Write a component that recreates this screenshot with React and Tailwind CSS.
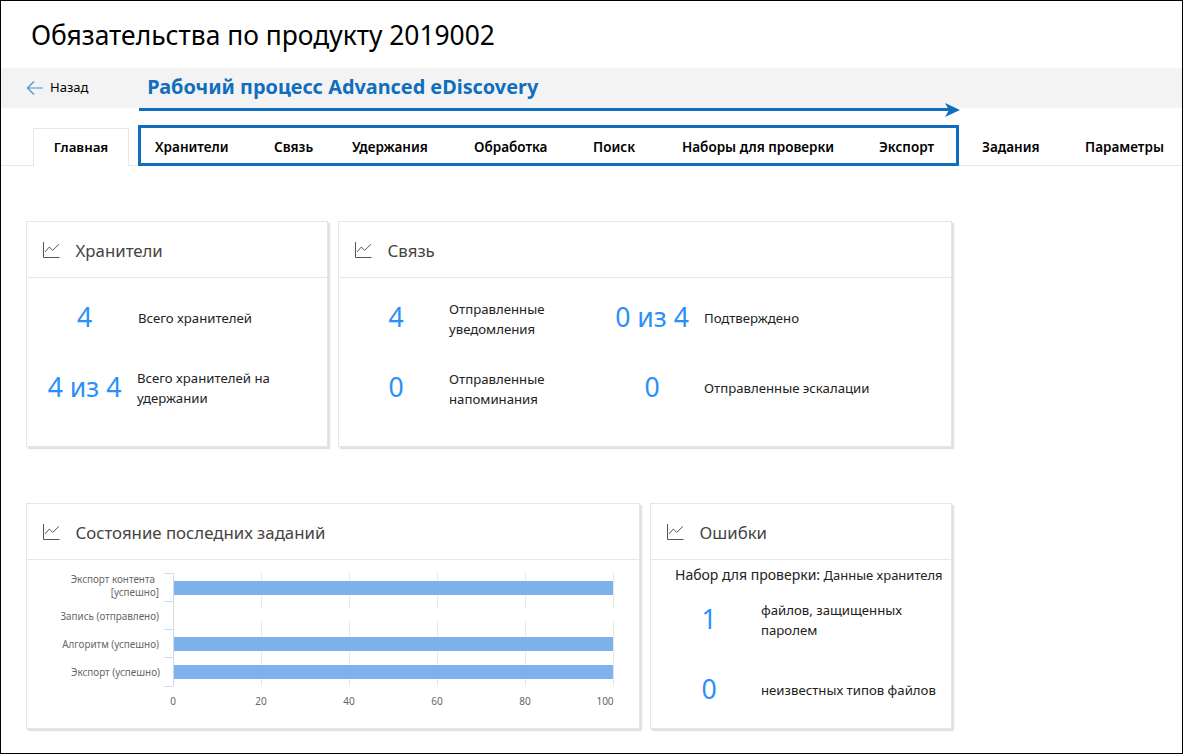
import React from "react";

function ChartIcon() {
  return (
    <svg width="18" height="18" viewBox="0 0 18 18" fill="none" stroke="#555" strokeWidth="1" className="shrink-0">
      <path d="M0.5 1V16.5H16.5" />
      <path d="M2 11L6.3 6L9.7 9.3L16 3.3" />
    </svg>
  );
}

function Card({ title, w, children }) {
  return (
    <div className={`${w} h-[226px] flex flex-col bg-white border border-[#e6e6e6] shadow-[2px_2px_1px_#e2e2e2]`}>
      <div className="h-[56px] shrink-0 flex items-center pl-[16px] border-b border-[#e6e6e6]">
        <ChartIcon />
        <span className="ml-[14.5px] mt-[4px] text-[16.8px] leading-none text-[#444]">{title}</span>
      </div>
      {children}
    </div>
  );
}

function Stat({ value, w, gap, children }) {
  return (
    <div className="flex items-center h-[40px]">
      <div className={`${w} -mt-[1px] text-center text-[26.6px] leading-none text-[#2b8ffa] shrink-0`}>{value}</div>
      <div className={`${gap} text-[13.2px] leading-[20px] text-[#222]`}>{children}</div>
    </div>
  );
}

const tabsInner = [
  ["Хранители", "w-[119px]"],
  ["Связь", "w-[78px]"],
  ["Удержания", "w-[122px]"],
  ["Обработка", "w-[119px]"],
  ["Поиск", "w-[89px]"],
  ["Наборы для проверки", "w-[197px]"],
  ["Экспорт", "w-[55px]"],
];

function Chart() {
  const grid = [261, 349, 437, 525, 613];
  return (
    <svg width="612" height="168" viewBox="27 560 612 168" className="block">
      {grid.map((x) => (
        <g key={x}>
          <line x1={x + 0.5} x2={x + 0.5} y1="573" y2="608" stroke="#e8e8e8" />
          <line x1={x + 0.5} x2={x + 0.5} y1="622" y2="686" stroke="#e8e8e8" />
        </g>
      ))}
      <line x1="173.5" x2="173.5" y1="573" y2="686" stroke="#d3dcec" />
      {[573, 601, 629, 657, 686].map((y) => (
        <line key={y} x1="164" x2="173" y1={y + 0.5} y2={y + 0.5} stroke="#d3dcec" />
      ))}
      {[581, 637, 665].map((y) => (
        <rect key={y} x="174" y={y} width="439" height="14" fill="#7cb3ec" />
      ))}
      <g fontFamily="'Noto Sans', sans-serif" fontSize="9.9" fill="#666" textAnchor="end">
        <text x="155" y="583">Экспорт контента</text>
        <text x="159" y="596">[успешно]</text>
        <text x="159" y="620">Запись (отправлено)</text>
        <text x="159" y="648">Алгоритм (успешно)</text>
        <text x="160" y="676">Экспорт (успешно)</text>
      </g>
      <g fontFamily="'Noto Sans', sans-serif" fontSize="10" fill="#666" textAnchor="middle">
        <text x="173" y="705">0</text>
        <text x="261" y="705">20</text>
        <text x="349" y="705">40</text>
        <text x="437" y="705">60</text>
        <text x="525" y="705">80</text>
        <text x="605" y="705">100</text>
      </g>
    </svg>
  );
}

export default function App() {
  return (
    <div className="relative w-[1183px] h-[754px] overflow-hidden border border-black bg-white font-['Noto_Sans',sans-serif] text-black">
      <div className="h-[67px] pl-[30px] pt-[2px] flex items-center text-[26.4px] leading-none">
        Обязательства по продукту 2019002
      </div>

      <div className="h-[40px] bg-[#f3f3f3] flex items-center">
        <svg width="18" height="16" viewBox="0 0 18 16" fill="none" stroke="#4a90d0" strokeWidth="1.2" className="ml-[25px]">
          <path d="M17 8H1.5M8 1.5L1.5 8L8 14.5" />
        </svg>
        <span className="ml-[6px] text-[13px]">Назад</span>
        <span className="ml-[59px] -mt-[3px] text-[19.85px] font-bold leading-none text-[#106ebe]">Рабочий процесс Advanced eDiscovery</span>
      </div>

      <div className="absolute left-[138px] top-[107px] w-[810px] h-[3px] bg-[#106ebe]" />
      <svg width="16" height="14" viewBox="0 0 16 14" className="absolute left-[944px] top-[102px]">
        <path d="M0 0L15 7L0 14L4 7Z" fill="#106ebe" />
      </svg>

      <div className="mt-[20px] h-[38px] flex border-b border-[#e6e6e6] text-[13.5px] font-semibold leading-none">
        <div className="ml-[32px] w-[96px] h-[38px] pt-[1px] flex items-center justify-center bg-white border border-b-0 border-[#e6e6e6] text-[13.3px]">
          Главная
        </div>
        <div className="ml-[9px] -mt-[3px] w-[821px] h-[41px] flex items-center pl-[14px] pt-[5px] border-[3px] border-[#106ebe]">
          {tabsInner.map(([t, w]) => (
            <span key={t} className={`${w} shrink-0 whitespace-nowrap`}>{t}</span>
          ))}
        </div>
        <div className="flex items-center ml-[23px] pt-[2px] gap-[46px] h-[38px]">
          <span className="w-[57px] text-center">Задания</span>
          <span className="w-[79px] text-center">Параметры</span>
        </div>
      </div>

      <div className="mt-[55px] ml-[25px] flex gap-[10px]">
        <Card title="Хранители" w="w-[302px]">
          <div className="pt-[20px] flex flex-col gap-[30px]">
            <Stat value="4" w="w-[115px]" gap="-ml-[4px]">Всего хранителей</Stat>
            <Stat value="4 из 4" w="w-[115px]" gap="-ml-[5px] w-[170px]">Всего хранителей на удержании</Stat>
          </div>
        </Card>
        <Card title="Связь" w="w-[614px]">
          <div className="pt-[20px] grid grid-cols-[255px_1fr] gap-y-[30px]">
            <Stat value="4" w="w-[114px]" gap="-ml-[4px] w-[130px] pt-[2px]">Отправленные уведомления</Stat>
            <Stat value="0 из 4" w="w-[116px]" gap="-ml-[6px]">Подтверждено</Stat>
            <Stat value="0" w="w-[114px]" gap="-ml-[4px] w-[130px] pt-[2px]">Отправленные напоминания</Stat>
            <Stat value="0" w="w-[116px]" gap="-ml-[6px]">Отправленные эскалации</Stat>
          </div>
        </Card>
      </div>

      <div className="mt-[56px] ml-[25px] flex gap-[10px]">
        <Card title="Состояние последних заданий" w="w-[614px]">
          <Chart />
        </Card>
        <Card title="Ошибки" w="w-[302px]">
          <div className="pl-[24px] mt-[5px] text-[13px] leading-[20px] text-[#222] whitespace-nowrap">
            <span className="text-[14px]">Набор для проверки:</span> Данные хранителя
          </div>
          <div className="mt-[15px] flex flex-col gap-[30px]">
            <Stat value="1" w="w-[116px]" gap="-ml-[6px] w-[170px]">файлов, защищенных паролем</Stat>
            <Stat value="0" w="w-[116px]" gap="-ml-[6px]">неизвестных типов файлов</Stat>
          </div>
        </Card>
      </div>
    </div>
  );
}
